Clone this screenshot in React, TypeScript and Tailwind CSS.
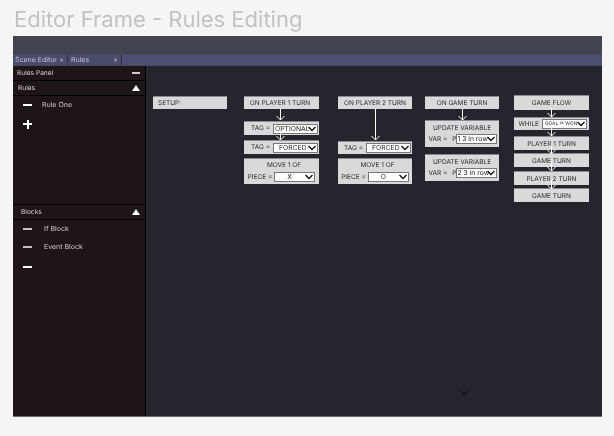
import React from "react";

function Chevron({ className = "" }: { className?: string }) {
  return (
    <svg width="8" height="6" viewBox="0 0 8 6" className={className} fill="none" stroke="#111" strokeWidth="1.4">
      <path d="M0.5 1 L4 4.5 L7.5 1" />
    </svg>
  );
}

function Arrow({ h, className }: { h: number; className: string }) {
  return (
    <svg width="11" height={h} viewBox={`0 0 11 ${h}`} fill="none" stroke="#fff" strokeWidth="1" className={`absolute z-10 ${className}`}>
      <path d={`M5.5 0 V${h - 1} M1.5 ${h - 5} L5.5 ${h - 1} L9.5 ${h - 5}`} />
    </svg>
  );
}

function Select({ text, w, small, pad }: { text: string; w: string; small?: boolean; pad?: string }) {
  return (
    <div className={`bg-white border border-[#777] h-[10px] flex items-center justify-between shrink-0 pr-[1px] ${w}`}>
      <span className={`whitespace-nowrap text-[#222] pt-[1px] ${small ? "text-[4.8px]" : "text-[6.8px]"} ${pad ?? "pl-[1px]"}`}>{text}</span>
      <Chevron className="shrink-0 -ml-[4px]" />
    </div>
  );
}

function Card({ children, className = "" }: { children: React.ReactNode; className?: string }) {
  return (
    <div className={`bg-[#d9d9d9] border-t border-[#8a8a92] text-[6.5px] leading-none text-[#2c2c2c] flex items-center justify-center whitespace-nowrap ${className}`}>
      {children}
    </div>
  );
}

function SideHeader({ title, tri, pl = "pl-[4px]" }: { title: string; tri?: boolean; pl?: string }) {
  return (
    <div className={`h-[15px] border-b border-black flex items-center justify-between pr-[5px] text-[6.6px] text-[#cfcccc] ${pl}`}>
      <span className="pt-[1px]">{title}</span>
      {tri ? (
        <svg width="8" height="6" viewBox="0 0 8 6"><path d="M4 0 L8 6 H0 Z" fill="#fff" /></svg>
      ) : (
        <div className="w-[8px] h-[2px] bg-[#ccc]" />
      )}
    </div>
  );
}

function SideItem({ label, sym, ml = "ml-[10px]", h = "h-[18px]" }: { label?: string; sym: "minus" | "plus" | "dim"; ml?: string; h?: string }) {
  return (
    <div className={`flex items-center ${h} pl-[10px] text-[7px] text-[#cfcccc]`}>
      <div className="w-[9px] h-[9px] relative shrink-0">
        <div className={`absolute left-0 top-[3.5px] w-[9px] h-[2px] ${sym === "dim" ? "bg-[#c4c1c1]" : "bg-white"}`} />
        {sym === "plus" && <div className="absolute left-[3.5px] top-0 w-[2px] h-[9px] bg-white" />}
      </div>
      {label && <span className={ml}>{label}</span>}
    </div>
  );
}

export default function App() {
  return (
    <div className="w-[614px] h-[436px] bg-[#f5f5f5] overflow-hidden [filter:blur(0.3px)] [text-rendering:geometricPrecision]" style={{ fontFamily: "Inter, sans-serif" }}>
      <div className="h-[36px] pl-[14px] pt-[6px] text-[22px] leading-[28px] text-[#c2c2c2]">Editor Frame - Rules Editing</div>
      <div className="ml-[13px] w-[589px] h-[381px] flex flex-col bg-[#24252d] border-b border-[#6b6b72]">
        <div className="h-[18px] bg-[#41434f] shrink-0" />
        <div className="h-[12px] bg-[#4e5073] border-y border-[#45475f] shrink-0 flex text-[7px] text-[#c0c2d4] items-center">
          <div className="w-[55px] pl-[2px] flex justify-between pr-[3px] border-r border-[#2f3042] h-full items-center bg-[#4a4c6c]"><span>Scene Editor</span><span>×</span></div>
          <div className="w-[54px] pl-[3px] flex justify-between pr-[3px] border-r border-[#2f3042] h-full items-center bg-[#4a4c6c]"><span>Rules</span><span>×</span></div>
        </div>
        <div className="flex-1 flex min-h-0">
          <div className="w-[133px] shrink-0 bg-[#1e1516] border-r border-black flex flex-col">
            <SideHeader title="Rules Panel" />
            <SideHeader title="Rules" tri pl="pl-[5px]" />
            <SideItem label="Rule One" sym="minus" />
            <div className="mt-[1px]"><SideItem sym="plus" /></div>
            <div className="h-[72px] border-b border-black" />
            <SideHeader title="Blocks" tri pl="pl-[8px]" />
            <SideItem label="If Block" sym="dim" ml="ml-[12px]" />
            <SideItem label="Event Block" sym="dim" ml="ml-[12px]" />
            <div className="mt-[2px]"><SideItem sym="minus" /></div>
          </div>

          <div className="flex-1 relative flex items-start pl-[7px] pt-[30px]">
            <Card className="w-[74px] h-[13px] !justify-start pl-[5px]">SETUP:</Card>

            <div className="ml-[17px] w-[75px] flex flex-col relative">
              <Card className="h-[13px] pt-[1px] pr-[3px]">ON PLAYER 1 TURN</Card>
              <Arrow h={12} className="left-[31px] top-[13px]" />
              <Card className="h-[14px] mt-[12px] gap-[3px] !justify-end pr-[1px]"><span>TAG =</span><Select text="OPTIONAL" w="w-[45px]" /></Card>
              <Arrow h={9} className="left-[31px] top-[36px]" />
              <Card className="h-[14px] mt-[5px] gap-[3px] !justify-end pr-[1px]"><span>TAG =</span><Select text="FORCED" w="w-[45px]" pad="pl-[5px]" /></Card>
              <Card className="h-[26px] mt-[4px] flex-col gap-[3px] pt-[1px]">
                <span className="pl-[5px]">MOVE 1 OF</span>
                <div className="flex items-center gap-[2px]"><span>PIECE =</span><Select text="X" w="w-[41px]" pad="pl-[12px]" /></div>
              </Card>
            </div>

            <div className="ml-[19px] w-[74px] flex flex-col relative">
              <Card className="h-[13px] pt-[1px]">ON PLAYER 2 TURN</Card>
              <Arrow h={32} className="left-[32px] top-[13px]" />
              <Card className="h-[13px] mt-[32px] gap-[3px] !justify-end pr-[1px]"><span>TAG =</span><Select text="FORCED" w="w-[45px]" pad="pl-[5px]" /></Card>
              <Card className="h-[26px] mt-[4px] flex-col gap-[3px] pt-[1px]">
                <span className="pl-[5px]">MOVE 1 OF</span>
                <div className="flex items-center gap-[2px]"><span>PIECE =</span><Select text="O" w="w-[41px]" pad="pl-[12px]" /></div>
              </Card>
            </div>

            <div className="ml-[13px] w-[74px] flex flex-col relative">
              <Card className="h-[13px] pt-[1px]">ON GAME TURN</Card>
              <Arrow h={12} className="left-[32px] top-[13px]" />
              <Card className="h-[27px] mt-[11px] flex-col gap-[3px] pt-[1px]">
                <span>UPDATE VARIABLE</span>
                <div className="flex items-center pl-[1px]"><span className="mr-[5px]">VAR =</span><span className="relative z-10">P</span><Select text="1 3 in row" w="w-[41px] -ml-[1px]" /></div>
              </Card>
              <Card className="h-[27px] mt-[7px] flex-col gap-[3px] pt-[1px]">
                <span>UPDATE VARIABLE</span>
                <div className="flex items-center pl-[1px]"><span className="mr-[5px]">VAR =</span><span className="relative z-10">P</span><Select text="2 3 in row" w="w-[41px] -ml-[1px]" /></div>
              </Card>
            </div>

            <div className="ml-[15px] w-[75px] -mt-[1px] flex flex-col relative">
              <Card className="h-[15px] pt-[1px]">GAME FLOW</Card>
              <Arrow h={10} className="left-[32px] top-[13px]" />
              <Card className="h-[13px] mt-[7px] gap-[3px] !justify-end pr-[2px]"><span>WHILE</span><Select text="GOAL != WON" small w="w-[45px]" pad="pl-[2px]" /></Card>
              <Arrow h={10} className="left-[32px] top-[32px]" />
              <Card className="h-[14px] mt-[6px] pt-[1px]">PLAYER 1 TURN</Card>
              <Arrow h={10} className="left-[32px] top-[50px]" />
              <Card className="h-[14px] mt-[3px] pt-[1px]">GAME TURN</Card>
              <Arrow h={10} className="left-[32px] top-[67px]" />
              <Card className="h-[14px] mt-[4px] pt-[1px]">PLAYER 2 TURN</Card>
              <Arrow h={10} className="left-[32px] top-[85px]" />
              <Card className="h-[14px] mt-[3px] pt-[1px]">GAME TURN</Card>
            </div>

            <Chevron className="absolute left-[314px] top-[324px]" />
          </div>
        </div>
      </div>
    </div>
  );
}
